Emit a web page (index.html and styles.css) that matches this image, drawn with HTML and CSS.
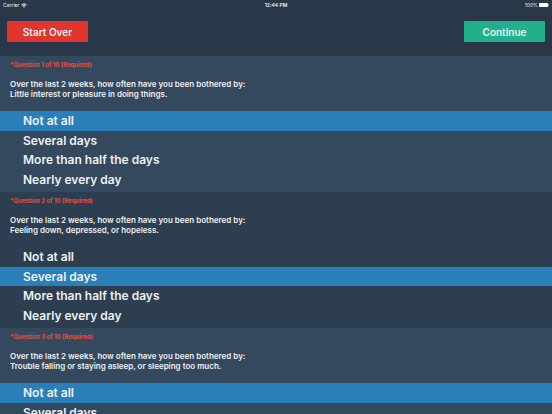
FILE: index.html
```html
<!DOCTYPE html>
<html lang="en">
<head>
    <meta charset="UTF-8">
    <meta name="viewport" content="width=device-width, initial-scale=1.0">
    <title>Questionnaire</title>
    <link rel="stylesheet" href="styles.css">
</head>
<body>
    <header class="header">
        <div class="status">
            <div class="carrier">
                <span>Carrier</span>
                <svg class="wifi" viewBox="0 0 12 9" aria-hidden="true">
                    <path d="M1 3.2a7.2 7.2 0 0 1 10 0M2.8 5.2a4.6 4.6 0 0 1 6.4 0" fill="none" stroke="#fff" stroke-width="1.8"/>
                    <path d="M6 8.8L4.1 6.9a2.7 2.7 0 0 1 3.8 0z" fill="#fff"/>
                </svg>
            </div>
            <div class="clock">12:44 PM</div>
            <div class="power">
                <span>100%</span>
                <svg class="battery" viewBox="0 0 20 8" aria-hidden="true">
                    <rect x="0" y="0" width="18" height="8" rx="1.5" fill="#fff"/>
                    <rect x="18.6" y="2.5" width="1.4" height="3" rx="0.6" fill="#fff"/>
                </svg>
            </div>
        </div>
        <div class="toolbar">
            <button type="button" class="button restart">Start Over</button>
            <button type="button" class="button continue">Continue</button>
        </div>
    </header>

    <form class="questions">
        <fieldset class="question">
            <legend class="label">*Question 1 of 10 (Required)</legend>
            <p class="prompt">Over the last 2 weeks, how often have you been bothered by:<br>Little interest or pleasure in doing things.</p>
            <div class="options">
                <label class="option"><input type="radio" name="q1" value="0" checked><span>Not at all</span></label>
                <label class="option"><input type="radio" name="q1" value="1"><span>Several days</span></label>
                <label class="option"><input type="radio" name="q1" value="2"><span>More than half the days</span></label>
                <label class="option"><input type="radio" name="q1" value="3"><span>Nearly every day</span></label>
            </div>
        </fieldset>

        <fieldset class="question">
            <legend class="label">*Question 2 of 10 (Required)</legend>
            <p class="prompt">Over the last 2 weeks, how often have you been bothered by:<br>Feeling down, depressed, or hopeless.</p>
            <div class="options">
                <label class="option"><input type="radio" name="q2" value="0"><span>Not at all</span></label>
                <label class="option"><input type="radio" name="q2" value="1" checked><span>Several days</span></label>
                <label class="option"><input type="radio" name="q2" value="2"><span>More than half the days</span></label>
                <label class="option"><input type="radio" name="q2" value="3"><span>Nearly every day</span></label>
            </div>
        </fieldset>

        <fieldset class="question">
            <legend class="label">*Question 3 of 10 (Required)</legend>
            <p class="prompt">Over the last 2 weeks, how often have you been bothered by:<br>Trouble falling or staying asleep, or sleeping too much.</p>
            <div class="options">
                <label class="option"><input type="radio" name="q3" value="0" checked><span>Not at all</span></label>
                <label class="option"><input type="radio" name="q3" value="1"><span>Several days</span></label>
                <label class="option"><input type="radio" name="q3" value="2"><span>More than half the days</span></label>
                <label class="option"><input type="radio" name="q3" value="3"><span>Nearly every day</span></label>
            </div>
        </fieldset>
    </form>
</body>
</html>
```

FILE: styles.css
```css
* {
    box-sizing: border-box;
}
body {
    font-family: Inter, "Liberation Sans", sans-serif;
    font-weight: 600;
    color: #ecf0f1;
    background: #34495e;
    height: 100vh;
    margin: 0;
    display: flex;
    flex-direction: column;
}
.header {
    background: #283848;
    padding-bottom: 14px;
}
.status {
    display: grid;
    grid-template-columns: 1fr auto 1fr;
    align-items: center;
    height: 10px;
    padding: 0 3px;
    font-size: 5px;
    font-weight: 400;
}
.carrier,
.power {
    display: flex;
    align-items: center;
    gap: 2px;
}
.power {
    justify-content: flex-end;
    gap: 1px;
}
.clock {
    font-weight: 600;
}
.wifi {
    width: 6px;
    height: 5px;
}
.battery {
    width: 10px;
    height: 4px;
}
.toolbar {
    display: flex;
    justify-content: space-between;
    padding: 11px 7px 0;
}
.button {
    width: 81px;
    height: 21px;
    padding: 0;
    border: none;
    border-radius: 1px;
    font: inherit;
    font-size: 10px;
    color: #ecf0f1;
    cursor: pointer;
}
.restart {
    background: #e03530;
}
.continue {
    background: #22b08c;
}
.questions {
    flex: 1;
    min-height: 0;
    overflow-y: auto;
    scrollbar-width: none;
}
.question {
    min-width: 0;
    margin: 0;
    padding: 4px 0 3px;
    border: none;
    background: #34495e;
}
.question:nth-child(even) {
    background: #2c3e50;
}
.label {
    float: left;
    width: 100%;
    padding: 0 10px;
    font-size: 6px;
    font-weight: 700;
    line-height: 10px;
    color: #e74c3c;
}
.prompt {
    clear: both;
    margin: 0;
    padding: 9px 10px 12px;
    font-size: 8px;
    line-height: 10px;
}
.options {
    display: grid;
    grid-auto-rows: 1fr;
    height: 78px;
}
.option {
    display: grid;
    font-size: 12px;
    line-height: 19px;
    cursor: pointer;
}
.option input {
    grid-area: 1 / 1;
    appearance: none;
    margin: 0;
}
.option span {
    grid-area: 1 / 1;
    padding: 0 23px;
}
.option input:checked + span {
    background: #2980b9;
}
```
